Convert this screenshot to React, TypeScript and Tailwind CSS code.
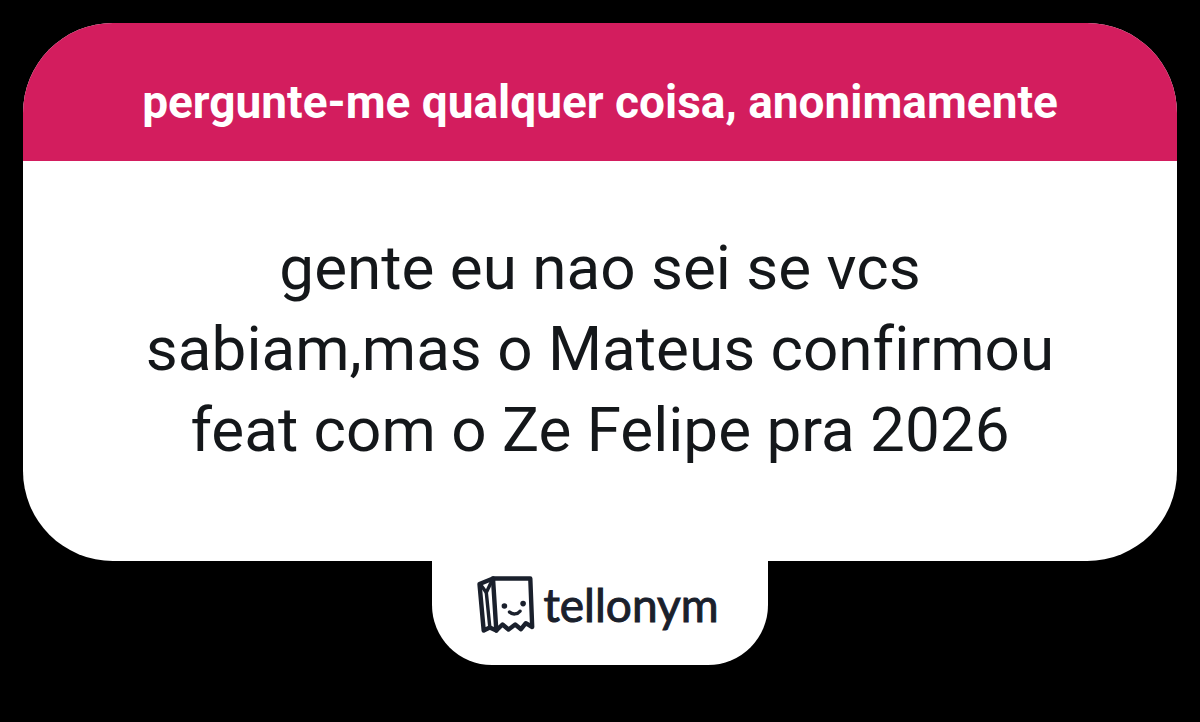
import React from 'react';

/**
 * Shareable question card
 * Pink prompt on top, the question below and the brand tab under it
 */

const card = {
  prompt: 'pergunte-me qualquer coisa, anonimamente',
  question: 'gente eu nao sei se vcs sabiam,mas o Mateus confirmou feat com o Ze Felipe pra 2026',
  brand: 'tellonym',
};

const BagLogo: React.FC = () => (
  <svg
    viewBox="0 0 80 80"
    className="h-20 w-20 shrink-0"
    fill="none"
    stroke="currentColor"
    strokeWidth="4.4"
    strokeLinecap="round"
    strokeLinejoin="round"
    aria-hidden="true"
  >
    {/* Front of the bag with the torn edge */}
    <path d="M24 13.5H61.3L63.2 62L56.8 58.2L52 64.2L46.2 59.5L39.5 64.5L33.5 59.5L27.3 65.5Z" />
    {/* Side fold */}
    <path d="M24 13.5L10.5 19L14.7 65.5L20.8 62.5L27.3 65.5" />
    <path d="M11.5 19.5L17.3 27.5L23.5 14.5" strokeWidth="3.4" />
    <path d="M17.3 27.5L20.8 62" strokeWidth="3.4" />
    {/* Face */}
    <circle cx="35.4" cy="41" r="2.8" fill="currentColor" stroke="none" />
    <circle cx="54.1" cy="38.6" r="2.8" fill="currentColor" stroke="none" />
    <path d="M40.5 47C43.5 50 48.5 49.4 51 46.2" strokeWidth="3.4" />
  </svg>
);

const BrandTab: React.FC = () => (
  <footer className="mx-auto flex h-26 w-84 max-w-full justify-center rounded-b-[60px] bg-white pt-1 pr-3 text-[#1a202c]">
    <div className="flex h-20 items-center">
      <BagLogo />
      <span className="-ml-1.5 font-['Lato',sans-serif] text-[46px] leading-none [-webkit-text-stroke:1px_#1a202c]">
        {card.brand}
      </span>
    </div>
  </footer>
);

const App: React.FC = () => {
  return (
    <main className="min-h-screen bg-black p-[23px] font-['Roboto',sans-serif]">
      <article className="overflow-hidden rounded-[90px] bg-white text-center">
        <header className="bg-[#d31d5e] px-10 pt-[51px] pb-[31px]">
          <h1 className="text-[46px] leading-14 font-bold text-white">{card.prompt}</h1>
        </header>
        <p className="px-[104px] pt-[66px] pb-[91px] text-[62px] leading-[81px] text-[#14171a] [font-variant-ligatures:none]">
          {card.question}
        </p>
      </article>
      <BrandTab />
    </main>
  );
};

export default App;
